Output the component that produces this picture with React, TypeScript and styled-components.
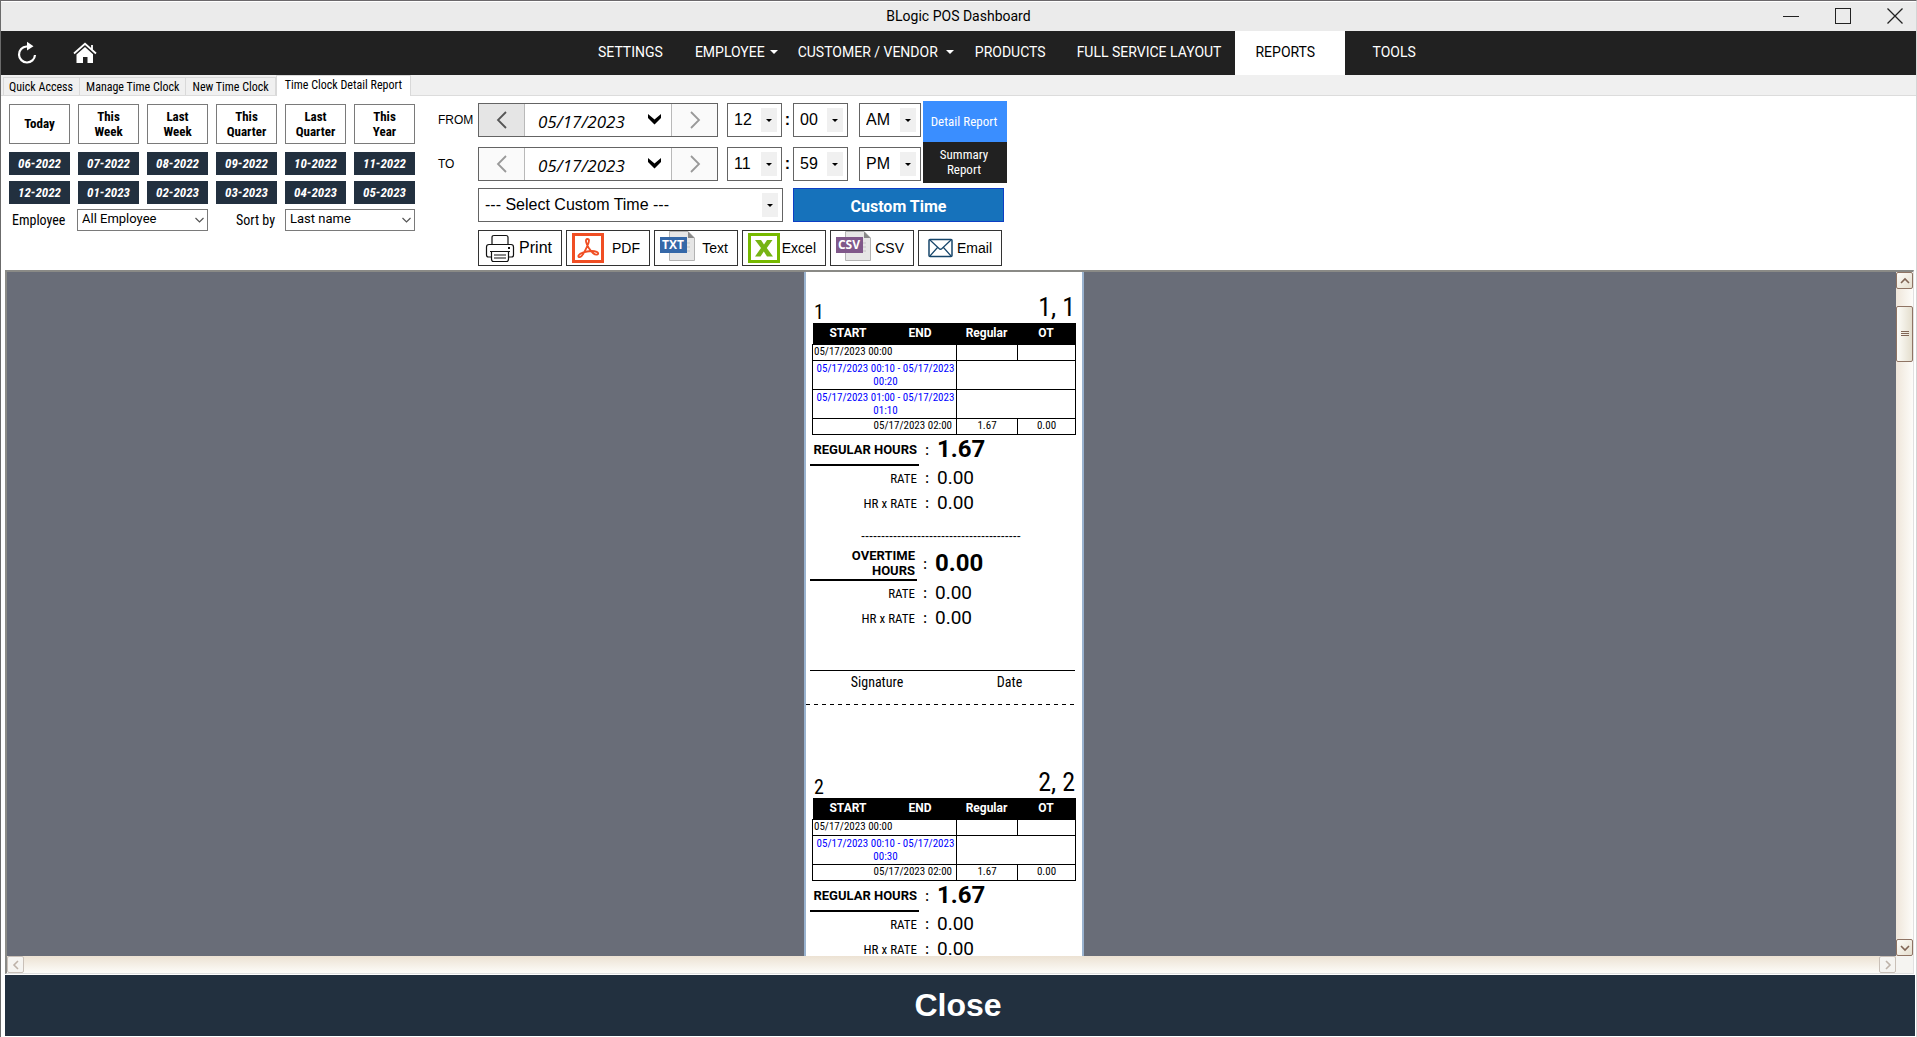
import React from "react";
import styled, { createGlobalStyle, css } from "styled-components";

const sans = `"Liberation Sans", Arial, sans-serif`;
const roboto = `Roboto, "Liberation Sans", sans-serif`;
const condensed = `"Roboto Condensed", Roboto, "Liberation Sans", sans-serif`;

const Global = createGlobalStyle`
  *, *::before, *::after { box-sizing: border-box; }
  body { margin: 0; background: #fff; font-family: ${roboto}; color: #000; }
  button, input, select { font: inherit; color: inherit; margin: 0; border-radius: 0; }
  button { cursor: pointer; padding: 0; }
  h1, h2, p { margin: 0; font-weight: 400; }
`;

const Window = styled.div`
  display: flex;
  flex-direction: column;
  height: 100vh;
  overflow: hidden;
  border-top: 1px solid #6b686b;
  border-left: 1px solid #6b6b6b;
  border-right: 1px solid #d5d5d5;
  background: #fff;
`;

const TitleBar = styled.header`
  display: grid;
  grid-template-columns: 1fr auto 1fr;
  align-items: center;
  height: 30px;
  flex: none;
  padding-bottom: 2px;
  border-top: 1px solid #fff;
  background: #ebebeb;
`;

const Title = styled.h1`
  grid-column: 2;
  font-size: 14px;
  line-height: 20px;
`;

const WindowButtons = styled.div`
  display: flex;
  gap: 36px;
  justify-self: end;
  padding-right: 13px;
`;

const WindowButton = styled.button`
  display: grid;
  place-items: center;
  width: 16px;
  height: 26px;
  border: 0;
  background: transparent;
`;

const NavBar = styled.nav`
  display: flex;
  height: 44px;
  flex: none;
  background: #212121;
  color: #fff;
`;

const NavTools = styled.div`
  display: flex;
  align-items: center;
  gap: 34px;
  width: 581px;
  padding-left: 14px;
`;

const IconButton = styled.button`
  display: grid;
  place-items: center;
  width: 24px;
  height: 24px;
  border: 0;
  background: transparent;
`;

const NavLink = styled.a<{ $active?: boolean; $pad?: number; $gap?: number }>`
  display: flex;
  align-items: center;
  gap: ${(p) => p.$gap ?? 5}px;
  padding: 0 ${(p) => p.$pad ?? 16}px 2px;
  font-size: 14px;
  line-height: 20px;
  white-space: nowrap;
  text-decoration: none;
  color: ${(p) => (p.$active ? "#000" : "#fff")};
  background: ${(p) => (p.$active ? "#fff" : "transparent")};
  ${(p) => p.$active && css`width: 110px; margin-right: 11px; padding-left: 20px;`}
`;

const Caret = styled.span`
  border: 4px solid transparent;
  border-top-color: currentColor;
  border-bottom: 0;
`;

const TabStrip = styled.div`
  display: flex;
  align-items: flex-end;
  height: 21px;
  flex: none;
  padding-left: 2px;
  border-bottom: 1px solid #dcdcdc;
  background: #f0f0f0;
`;

const Tab = styled.button<{ $active?: boolean }>`
  height: ${(p) => (p.$active ? 21 : 18)}px;
  margin-bottom: ${(p) => (p.$active ? -1 : 0)}px;
  padding: 0 6px;
  border: 1px solid #d9d9d9;
  border-bottom: 0;
  border-left-width: ${(p) => (p.$active ? 1 : 0)}px;
  background: ${(p) => (p.$active ? "#fff" : "#f0f0f0")};
  font-family: ${condensed};
  font-size: 12px;
  line-height: 16px;
  white-space: nowrap;
  &:first-child { border-left-width: 1px; padding: 0 6px 0 5px; }
  ${(p) => p.$active && css`padding: 0 8px 3px;`}
`;

const Body = styled.main`
  display: flex;
  flex-direction: column;
  flex: 1;
  min-height: 0;
  padding: 0 1px 1px 4px;
`;

const Filters = styled.section`
  display: flex;
  align-items: flex-start;
  gap: 23px;
  padding: 5px 0 4px 4px;
`;

const QuickPanel = styled.div`
  padding-top: 3px;
`;

const RangeGrid = styled.div`
  display: grid;
  grid-template-columns: repeat(6, 61px);
  column-gap: 8px;
  row-gap: 6px;
`;

const RangeButton = styled.button`
  height: 40px;
  margin-bottom: 2px;
  padding: 0 7px 1px;
  border: 1px solid #7a7a7a;
  background: #fff;
  font-family: ${condensed};
  font-size: 13px;
  font-weight: 700;
  line-height: 15px;
`;

const MonthButton = styled.button`
  height: 23px;
  border: 0;
  background: #22303f;
  color: #fff;
  font-family: ${condensed};
  font-size: 13px;
  font-weight: 700;
  font-style: italic;
  line-height: 15px;
`;

const SortRow = styled.div`
  display: grid;
  grid-template-columns: 68px 131px 77px 130px;
  align-items: center;
  margin-top: 5px;
  font-size: 13px;
`;

const FieldLabel = styled.label<{ $end?: boolean }>`
  padding: 0 ${(p) => (p.$end ? 10 : 3)}px;
  text-align: ${(p) => (p.$end ? "right" : "left")};
  font-family: ${condensed};
  font-size: 14px;
  line-height: 16px;
`;

const SelectBox = styled.span<{ $w?: number }>`
  display: grid;
  align-items: center;
  ${(p) => p.$w && css`width: ${p.$w}px;`}
  > * { grid-area: 1 / 1; }
  > span, > svg { justify-self: end; pointer-events: none; }
`;

const SmallSelect = styled.select`
  appearance: none;
  width: 100%;
  height: 22px;
  padding: 0 20px 4px 4px;
  border: 1px solid #7a7a7a;
  background: #fff;
  font-size: 13px;
`;

const BigSelect = styled.select`
  appearance: none;
  width: 100%;
  height: 34px;
  padding: 0 22px 2px 6px;
  border: 1px solid #646464;
  background: #fff;
  font-family: ${sans};
  font-size: 16px;
`;

const ArrowTile = styled.span`
  display: grid;
  place-items: center;
  width: 16px;
  height: 24px;
  margin-right: 5px;
  background: #f0f0f0;
  &::after {
    content: "";
    border: 3px solid transparent;
    border-top-color: #000;
    border-bottom: 0;
  }
`;

const RangePanel = styled.div`
  display: flex;
  flex-direction: column;
`;

const RangeTop = styled.div`
  display: flex;
  gap: 2px;
`;

const RangeRows = styled.div`
  display: flex;
  flex-direction: column;
  gap: 10px;
  padding-top: 2px;
`;

const RangeRow = styled.div`
  display: flex;
  align-items: center;
`;

const RangeLabel = styled.label`
  width: 40px;
  font-family: ${sans};
  font-size: 12px;
  line-height: 16px;
`;

const DateBox = styled.div`
  display: flex;
  width: 240px;
  height: 34px;
  margin-right: 9px;
  border: 1px solid #646464;
  background: #fff;
`;

const StepButton = styled.button<{ $hot?: boolean; $side: "left" | "right" }>`
  display: grid;
  place-items: center;
  width: 46px;
  border: 0;
  border-${(p) => (p.$side === "left" ? "right" : "left")}: 1px solid #b9b9b9;
  background: ${(p) => (p.$hot ? "#e5e5e5" : "#fafafa")};
  color: ${(p) => (p.$hot ? "#555" : "#999")};
`;

const DateInput = styled.input`
  width: 112px;
  padding: 2px 0 0 13px;
  border: 0;
  background: transparent;
  font-family: "Open Sans", "Noto Sans", sans-serif;
  font-size: 17px;
  font-style: italic;
`;

const DropButton = styled.button`
  display: grid;
  place-items: center;
  flex: 1;
  padding-bottom: 2px;
  border: 0;
  background: transparent;
`;

const Colon = styled.span`
  width: 11px;
  text-align: center;
  font-family: ${sans};
  font-size: 16px;
  font-weight: 700;
  line-height: 20px;
`;

const Gap = styled.span`
  width: 11px;
`;

const ReportSwitch = styled.div`
  display: flex;
  flex-direction: column;
`;

const SwitchButton = styled.button<{ $on?: boolean }>`
  width: 84px;
  height: 41px;
  padding: 0 8px 1px 6px;
  border: 0;
  background: ${(p) => (p.$on ? "#3a8eff" : "#212121")};
  color: #fff;
  font-family: ${condensed};
  font-size: 13px;
  line-height: 15px;
`;

const CustomRow = styled.div`
  display: flex;
  gap: 10px;
  padding: 5px 0 8px 40px;
`;

const CustomButton = styled.button`
  width: 211px;
  height: 34px;
  padding-top: 2px;
  border: 1px solid #0d3fc4;
  background: #1672bb;
  color: #fff;
  font-size: 16px;
  font-weight: 700;
`;

const ExportRow = styled.div`
  display: flex;
  gap: 4px;
  padding-left: 40px;
`;

const ExportButton = styled.button<{ $large?: boolean }>`
  display: flex;
  align-items: center;
  justify-content: space-between;
  width: 84px;
  height: 36px;
  padding: 0 9px 0 5px;
  border: 1px solid #333;
  background: #fff;
  font-family: ${sans};
  font-size: ${(p) => (p.$large ? 16 : 14)}px;
  line-height: 20px;
  > span { padding-bottom: 1px; }
`;

const Viewer = styled.section`
  display: grid;
  grid-template-columns: 1fr 17px;
  grid-template-rows: 1fr 17px;
  flex: 1;
  min-height: 0;
  margin-right: 1px;
  border: solid #e0e0e0;
  border-width: 2px 1px 1px 2px;
  border-top-color: #8a8a86;
  border-left-color: #8a8a86;
  background: #f5f4f1;
`;

const Canvas = styled.div`
  display: flex;
  justify-content: center;
  overflow: hidden;
  padding-right: 15px;
  background: #696d78;
`;

const Paper = styled.div`
  width: 280px;
  height: max-content;
  border: solid #9ab3cf;
  border-width: 0 2px;
  background: #fff;
`;

const VScroll = styled.div`
  display: flex;
  flex-direction: column;
  background: linear-gradient(90deg, #efe6da, #fdfcf9);
`;

const HScroll = styled.div`
  display: flex;
  justify-content: space-between;
  background: linear-gradient(180deg, #ece2d3, #fdfcf9);
`;

const ScrollButton = styled.button<{ $off?: boolean }>`
  display: grid;
  place-items: center;
  width: 17px;
  height: 17px;
  border: 1px solid ${(p) => (p.$off ? "#c9c0b8" : "#8f7464")};
  border-radius: 2px;
  background: ${(p) => (p.$off ? "#f5f4f1" : "linear-gradient(135deg, #fdfcf8, #e6dfcf)")};
  color: ${(p) => (p.$off ? "#bdb2a8" : "#806555")};
`;

const ScrollThumb = styled(ScrollButton)`
  height: 56px;
  margin: 17px 0 auto;
  background: linear-gradient(90deg, #fdfcf8, #e4dece);
`;

const Record = styled.article`
  min-height: 475px;
  padding: 0 7px 0 4px;
`;

const RecordHead = styled.div`
  display: flex;
  justify-content: space-between;
  align-items: flex-end;
  height: 51px;
  padding: 0 0 0 4px;
  font-family: ${condensed};
`;

const RecordId = styled.span`
  font-size: 20px;
  font-weight: 400;
  line-height: 22px;
`;

const RecordName = styled.h2`
  font-family: ${condensed};
  font-size: 26px;
  line-height: 32px;
`;

const Sheet = styled.table`
  width: 263px;
  margin-left: 2px;
  border-collapse: collapse;
  table-layout: fixed;
  font-family: ${condensed};
  font-size: 11px;
  line-height: 13px;
  th {
    height: 21px;
    padding: 0 1px 0 0;
    background: #000;
    color: #fff;
    font-family: ${roboto};
    font-size: 12px;
    font-weight: 700;
  }
  td {
    height: 16px;
    padding: 0 1px 1px;
    border: 1px solid #000;
    text-align: center;
  }
`;

const BreakCell = styled.td`
  && { padding: 1px 1px 1px 3px; color: #0000ff; }
`;

const StartCell = styled.td`
  && { text-align: left; }
`;

const EndCell = styled.td`
  && { text-align: right; padding-right: 4px; }
`;

const Totals = styled.div`
  display: flex;
  flex-direction: column;
`;

const TotalRow = styled.div<{ $w: number; $h: number }>`
  display: grid;
  grid-template-columns: ${(p) => p.$w}px 18px 1fr;
  align-items: center;
  height: ${(p) => p.$h}px;
`;

const TotalLabel = styled.span<{ $strong?: boolean }>`
  align-self: stretch;
  display: flex;
  align-items: center;
  justify-content: flex-end;
  padding-right: 2px;
  text-align: right;
  font-family: ${(p) => (p.$strong ? roboto : condensed)};
  font-size: 13px;
  font-weight: ${(p) => (p.$strong ? 700 : 400)};
  line-height: 15px;
  border-bottom: ${(p) => (p.$strong ? "2px solid #000" : "0")};
`;

const TotalColon = styled.span`
  padding-right: 2px;
  text-align: center;
  font-size: 14px;
  font-weight: 500;
  line-height: 18px;
`;

const TotalValue = styled.span<{ $strong?: boolean }>`
  padding-bottom: ${(p) => (p.$strong ? 2 : 0)}px;
  font-size: ${(p) => (p.$strong ? 24 : 19)}px;
  font-weight: ${(p) => (p.$strong ? 700 : 400)};
  line-height: 24px;
`;

const DashText = styled.p`
  height: 32px;
  padding: 12px 0 0 51px;
  font-family: ${sans};
  font-size: 12px;
  line-height: 16px;
`;

const Signatures = styled.div`
  display: grid;
  grid-template-columns: 134px 1fr;
  margin-top: 39px;
  padding-top: 3px;
  border-top: 1px solid #000;
  text-align: center;
  font-family: ${condensed};
  font-size: 14px;
  line-height: 16px;
`;

const TearLine = styled.hr`
  height: 1px;
  margin: 14px 0 0 -4px;
  border: 0;
  background: repeating-linear-gradient(90deg, #000 0 4px, transparent 4px 8px);
`;

const CloseButton = styled.button`
  height: 61px;
  flex: none;
  margin-top: 1px;
  padding-right: 4px;
  border: 0;
  background: #22303f;
  color: #fff;
  font-family: ${sans};
  font-size: 32px;
  font-weight: 700;
`;

type Dir = "up" | "down" | "left" | "right";
const chevrons: Record<Dir, string> = {
  up: "M1 7 5 3 9 7",
  down: "M1 3 5 7 9 3",
  left: "M7 1 3 5 7 9",
  right: "M3 1 7 5 3 9",
};

function Chevron({ dir, size = 10, weight = 1.6 }: { dir: Dir; size?: number; weight?: number }) {
  return (
    <svg width={size} height={size} viewBox="0 0 10 10" fill="none" stroke="currentColor" strokeWidth={weight}>
      <path d={chevrons[dir]} />
    </svg>
  );
}

const ComboArrow = styled.svg`
  width: 9px;
  height: 6px;
  margin-right: 4px;
`;

function Combo({ id, value, width }: { id: string; value: string; width?: number }) {
  return (
    <SelectBox $w={width}>
      <SmallSelect id={id} defaultValue={value}>
        <option>{value}</option>
      </SmallSelect>
      <ComboArrow viewBox="0 0 9 6" fill="none" stroke="#555" strokeWidth="1.2">
        <path d="M.5 1 4.5 5l4-4" />
      </ComboArrow>
    </SelectBox>
  );
}

function TimeSelect({ label, value, width }: { label: string; value: string; width: number }) {
  return (
    <SelectBox $w={width}>
      <BigSelect aria-label={label} defaultValue={value}>
        <option>{value}</option>
      </BigSelect>
      <ArrowTile />
    </SelectBox>
  );
}

function DateRow({ id, label, hot, time }: { id: string; label: string; hot?: boolean; time: string[] }) {
  return (
    <RangeRow>
      <RangeLabel htmlFor={id}>{label}</RangeLabel>
      <DateBox>
        <StepButton $side="left" $hot={hot} aria-label="Previous day">
          <Chevron dir="left" size={20} weight={0.9} />
        </StepButton>
        <DateInput id={id} defaultValue="05/17/2023" />
        <DropButton aria-label="Open calendar">
          <svg width="13" height="11" viewBox="0 0 13 11">
            <path d="M0 0 6.500 5.500 13 0V4L6.500 10.500 0 4Z" />
          </svg>
        </DropButton>
        <StepButton $side="right" aria-label="Next day">
          <Chevron dir="right" size={20} weight={0.9} />
        </StepButton>
      </DateBox>
      <TimeSelect label={`${label} hour`} value={time[0]} width={55} />
      <Colon>:</Colon>
      <TimeSelect label={`${label} minute`} value={time[1]} width={55} />
      <Gap />
      <TimeSelect label={`${label} half of day`} value={time[2]} width={62} />
    </RangeRow>
  );
}

const IconSvg = styled.svg`
  flex: none;
`;

const PrintIcon = () => (
  <IconSvg width="32" height="30" viewBox="0 0 32 30" fill="none" stroke="#111" strokeWidth="1.200">
    <path d="M8 11V4.500Q8 2.500 10 2.500H22Q24 2.500 24 4.500V11" />
    <path d="M7 24H4.500Q2.500 24 2.500 22V14Q2.500 11.500 5 11.500H27Q29.500 11.500 29.500 14V22Q29.500 24 27.500 24H25" />
    <path d="M6 18.500H26M7.500 18.500V26Q7.500 28.500 9.500 28.500H22.500Q24.500 28.500 24.500 26V18.500M10 22H22M10 25H22" />
    <path d="M24 15H26" strokeWidth="2" />
  </IconSvg>
);

const PdfIcon = () => (
  <IconSvg width="32" height="30" viewBox="0 0 32 30" fill="none" stroke="#f04e23">
    <rect x="1.500" y="1.500" width="29" height="27" strokeWidth="3" />
    <path
      d="M15.500 6C12.500 6 14.500 11 16.500 14.500 19 18.500 23 22.500 25.500 21.500 28 19.500 23 17.800 19 18 14 18.200 8 20 6.500 22.500 5.800 25 9 25 11.500 20.500 14 16 17 10 17 7.500 17 6.300 16.300 6 15.500 6Z"
      strokeWidth="1.800"
    />
  </IconSvg>
);

const DocIcon = ({ text, tone }: { text: string; tone: string }) => (
  <IconSvg width="36" height="34" viewBox="0 1 36 34">
    <path d="M9.500 1.500H28L34.500 8V30.500H9.500Z" fill="#e6e6e6" stroke="#b3b3b3" />
    <path d="M28 1.500 34.500 8H28Z" fill="#888" />
    <path d="M27 13h3M27 17h3M27 21h3" stroke="#c4c4c4" />
    <rect x="0" y="7" width="27" height="16" fill={tone} />
    <text x="13" y="19" fill="#fff" textAnchor="middle" fontFamily="Open Sans, sans-serif" fontSize="12" fontWeight="700">
      {text}
    </text>
  </IconSvg>
);

const ExcelIcon = () => (
  <IconSvg width="32" height="30" viewBox="0 0 32 30">
    <rect x="1.500" y="1.500" width="29" height="27" fill="#fff" stroke="#76b900" strokeWidth="3" />
    <path d="M7 7H13L16 11.500 19 7H24.500L18.800 15 25 23.500H19L15.800 18.500 12.500 23.500H7L13 15Z" fill="#76b414" />
  </IconSvg>
);

const MailIcon = () => (
  <IconSvg width="32" height="20" viewBox="-4 0 32 20" fill="none" stroke="#17466b" strokeWidth="1.500">
    <rect x="1" y="1.500" width="23" height="17" rx="1" />
    <path d="M2 2 11 10.500Q12.500 12 14 10.500L23 2M2 18 9.500 9.500M23 18 15.500 9.500" strokeWidth="1.200" />
  </IconSvg>
);

const ranges = ["Today", "This Week", "Last Week", "This Quarter", "Last Quarter", "This Year"];
const months = [
  "06-2022", "07-2022", "08-2022", "09-2022", "10-2022", "11-2022",
  "12-2022", "01-2023", "02-2023", "03-2023", "04-2023", "05-2023",
];
const exportsList = [
  { name: "Print", icon: <PrintIcon />, large: true },
  { name: "PDF", icon: <PdfIcon /> },
  { name: "Text", icon: <DocIcon text="TXT" tone="#3568a8" /> },
  { name: "Excel", icon: <ExcelIcon /> },
  { name: "CSV", icon: <DocIcon text="CSV" tone="#80588a" /> },
  { name: "Email", icon: <MailIcon /> },
];

type TotalLineProps = { label: string; value: string; w: number; h?: number; strong?: boolean };

function TotalLine({ label, value, w, h = 25, strong }: TotalLineProps) {
  return (
    <TotalRow $w={w} $h={h}>
      <TotalLabel $strong={strong}>{label}</TotalLabel>
      <TotalColon>:</TotalColon>
      <TotalValue $strong={strong}>{value}</TotalValue>
    </TotalRow>
  );
}

type RecordProps = { id: string; name: string; breaks: string[]; overtime?: string };

function TimeRecord({ id, name, breaks, overtime }: RecordProps) {
  return (
    <Record>
      <RecordHead>
        <RecordId>{id}</RecordId>
        <RecordName>{name}</RecordName>
      </RecordHead>
      <Sheet>
        <colgroup>
          <col width="72" />
          <col width="72" />
          <col width="61" />
          <col width="58" />
        </colgroup>
        <thead>
          <tr>
            <th>START</th>
            <th>END</th>
            <th>Regular</th>
            <th>OT</th>
          </tr>
        </thead>
        <tbody>
          <tr>
            <StartCell colSpan={2}>05/17/2023 00:00</StartCell>
            <td />
            <td />
          </tr>
          {breaks.map((b) => (
            <tr key={b}>
              <BreakCell colSpan={2}>{b}</BreakCell>
              <td colSpan={2} />
            </tr>
          ))}
          <tr>
            <EndCell colSpan={2}>05/17/2023 02:00</EndCell>
            <td>1.67</td>
            <td>0.00</td>
          </tr>
        </tbody>
      </Sheet>
      <Totals>
        <TotalLine label="REGULAR HOURS" value="1.67" w={109} h={31} strong />
        <TotalLine label="RATE" value="0.00" w={109} />
        <TotalLine label="HR x RATE" value="0.00" w={109} />
      </Totals>
      {overtime && (
        <>
          <DashText>----------------------------------------</DashText>
          <Totals>
            <TotalLine label="OVERTIME HOURS" value={overtime} w={107} h={33} strong />
            <TotalLine label="RATE" value="0.00" w={107} />
            <TotalLine label="HR x RATE" value="0.00" w={107} />
          </Totals>
          <Signatures>
            <span>Signature</span>
            <span>Date</span>
          </Signatures>
          <TearLine />
        </>
      )}
    </Record>
  );
}

export default function App() {
  return (
    <Window>
      <Global />
      <TitleBar>
        <Title>BLogic POS Dashboard</Title>
        <WindowButtons>
          <WindowButton aria-label="Minimize">
            <svg width="16" height="16"><path d="M0 8.500H16" stroke="#222" /></svg>
          </WindowButton>
          <WindowButton aria-label="Maximize">
            <svg width="16" height="16"><rect x=".5" y=".5" width="15" height="15" fill="none" stroke="#222" /></svg>
          </WindowButton>
          <WindowButton aria-label="Close window">
            <svg width="16" height="16"><path d="M.5.5l15 15M15.500.5l-15 15" stroke="#222" strokeWidth="1.300" /></svg>
          </WindowButton>
        </WindowButtons>
      </TitleBar>

      <NavBar>
        <NavTools>
          <IconButton aria-label="Refresh">
            <svg width="22" height="24" viewBox="0 0 22 24" fill="none">
              <path d="M13 5.500H10.500A8 8 0 1 0 19 14" stroke="#fff" strokeWidth="2.200" />
              <path d="M11 .8 17.500 5.300 11 9.500Z" fill="#fff" />
            </svg>
          </IconButton>
          <IconButton aria-label="Home">
            <svg width="24" height="22" viewBox="0 0 24 22" fill="none">
              <path d="M1 11.500 12 1.800 23 11.500M19 7.500V3" stroke="#fff" strokeWidth="1.800" />
              <path d="M12 5 20 12.200V21H14.500V15H10V21H3.500V12.600Z" fill="#fff" />
            </svg>
          </IconButton>
        </NavTools>
        <NavLink href="#settings">SETTINGS</NavLink>
        <NavLink href="#employee">EMPLOYEE <Caret /></NavLink>
        <NavLink href="#customer" $pad={4} $gap={8}>CUSTOMER / VENDOR <Caret /></NavLink>
        <NavLink href="#products" $pad={17}>PRODUCTS</NavLink>
        <NavLink href="#layout" $pad={14}>FULL SERVICE LAYOUT</NavLink>
        <NavLink href="#reports" $active>REPORTS</NavLink>
        <NavLink href="#tools">TOOLS</NavLink>
      </NavBar>

      <TabStrip>
        <Tab>Quick Access</Tab>
        <Tab>Manage Time Clock</Tab>
        <Tab>New Time Clock</Tab>
        <Tab $active>Time Clock Detail Report</Tab>
      </TabStrip>

      <Body>
        <Filters>
          <QuickPanel>
            <RangeGrid>
              {ranges.map((r) => <RangeButton key={r}>{r}</RangeButton>)}
              {months.map((m) => <MonthButton key={m}>{m}</MonthButton>)}
            </RangeGrid>
            <SortRow>
              <FieldLabel htmlFor="employee">Employee</FieldLabel>
              <Combo id="employee" value="All Employee" />
              <FieldLabel htmlFor="sort" $end>Sort by</FieldLabel>
              <Combo id="sort" value="Last name" />
            </SortRow>
          </QuickPanel>

          <RangePanel>
            <RangeTop>
              <RangeRows>
                <DateRow id="from" label="FROM" hot time={["12", "00", "AM"]} />
                <DateRow id="to" label="TO" time={["11", "59", "PM"]} />
              </RangeRows>
              <ReportSwitch>
                <SwitchButton $on>Detail Report</SwitchButton>
                <SwitchButton>Summary Report</SwitchButton>
              </ReportSwitch>
            </RangeTop>
            <CustomRow>
              <TimeSelect label="Custom time" value="--- Select Custom Time ---" width={305} />
              <CustomButton>Custom Time</CustomButton>
            </CustomRow>
            <ExportRow>
              {exportsList.map((e) => (
                <ExportButton key={e.name} $large={e.large}>
                  {e.icon}
                  <span>{e.name}</span>
                </ExportButton>
              ))}
            </ExportRow>
          </RangePanel>
        </Filters>

        <Viewer>
          <Canvas>
            <Paper>
              <TimeRecord
                id="1"
                name="1, 1"
                overtime="0.00"
                breaks={["05/17/2023 00:10 - 05/17/2023 00:20", "05/17/2023 01:00 - 05/17/2023 01:10"]}
              />
              <TimeRecord id="2" name="2, 2" breaks={["05/17/2023 00:10 - 05/17/2023 00:30"]} />
            </Paper>
          </Canvas>
          <VScroll>
            <ScrollButton aria-label="Scroll up"><Chevron dir="up" /></ScrollButton>
            <ScrollThumb aria-label="Scroll position">
              <svg width="8" height="6"><path d="M0 .5H8M0 2.500H8M0 4.500H8" stroke="currentColor" /></svg>
            </ScrollThumb>
            <ScrollButton aria-label="Scroll down"><Chevron dir="down" /></ScrollButton>
          </VScroll>
          <HScroll>
            <ScrollButton $off aria-label="Scroll left"><Chevron dir="left" /></ScrollButton>
            <ScrollButton $off aria-label="Scroll right"><Chevron dir="right" /></ScrollButton>
          </HScroll>
        </Viewer>
        <CloseButton>Close</CloseButton>
      </Body>
    </Window>
  );
}
